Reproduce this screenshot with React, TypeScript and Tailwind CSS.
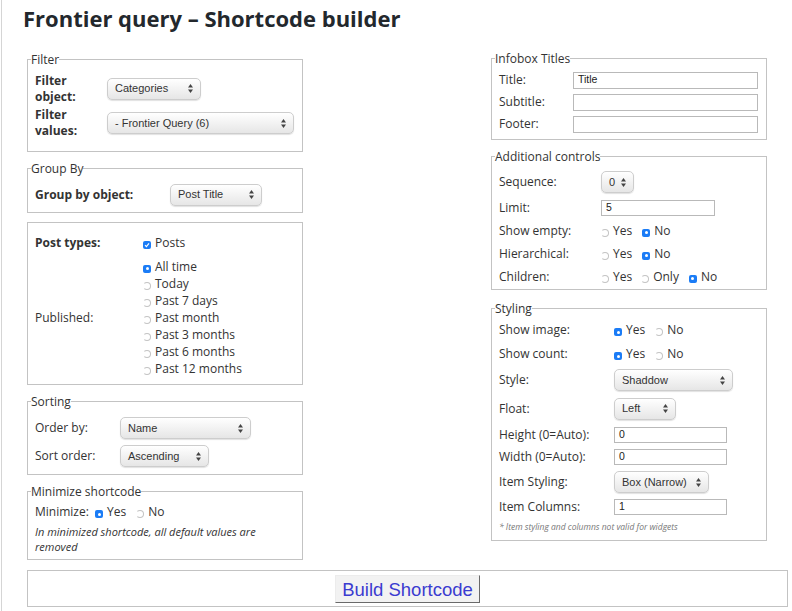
import React from "react";

function Arrows() {
  return (
    <svg width="5" height="9" viewBox="0 0 5 9" className="shrink-0">
      <path d="M2.5 0 L5 3.5 L0 3.5 Z" fill="#444" />
      <path d="M2.5 9 L5 5.5 L0 5.5 Z" fill="#444" />
    </svg>
  );
}

function Select({ value, w }: { value: string; w: string }) {
  return (
    <div
      className={`flex h-[22px] items-center justify-between rounded-[5px] border border-[#cdcdcd] bg-linear-to-b from-white to-[#e6e6e6] pl-[7px] pr-[7px] font-['Liberation_Sans',Arial,sans-serif] text-[11px] text-[#333] shadow-[0_1px_1px_rgba(0,0,0,0.12)] ${w}`}
    >
      <span>{value}</span>
      <Arrows />
    </div>
  );
}

function TextInput({ value, w, h }: { value: string; w: string; h: string }) {
  return (
    <div
      className={`flex items-center border border-[#b9b9b9] bg-white pl-[4px] font-['Liberation_Sans',Arial,sans-serif] text-[10.5px] text-[#222] ${w} ${h}`}
    >
      {value}
    </div>
  );
}

function Radio({ checked }: { checked?: boolean }) {
  if (checked) {
    return (
      <span className="ml-[3px] inline-flex h-[8px] w-[8px] translate-y-[2px] items-center justify-center rounded-[2px] bg-[#1b7cf6]">
        <span className="h-[3px] w-[3px] rounded-full bg-white" />
      </span>
    );
  }
  return (
    <span className="ml-[3px] inline-block h-[8px] w-[8px] translate-y-[2px] rounded-full border border-[#c4c4c4] border-l-transparent" />
  );
}

function Check() {
  return (
    <span className="ml-[3px] inline-flex h-[8px] w-[8px] translate-y-[2px] items-center justify-center rounded-[2px] bg-[#1b7cf6]">
      <svg width="6" height="6" viewBox="0 0 6 6">
        <path d="M1 3.2 L2.4 4.6 L5 1.4" stroke="white" strokeWidth="1.2" fill="none" />
      </svg>
    </span>
  );
}

function Opt({ checked, label, gap }: { checked?: boolean; label: string; gap?: string }) {
  return (
    <span className={`flex items-center ${gap ?? ""}`}>
      <Radio checked={checked} />
      <span className="ml-[4px]">{label}</span>
    </span>
  );
}

function Fieldset({
  legend,
  className,
  children,
}: {
  legend?: string;
  className?: string;
  children: React.ReactNode;
}) {
  return (
    <fieldset className={`border border-[#c3c3c3] px-[7px] ${className ?? ""}`}>
      {legend && <legend className="-ml-[4px] text-[12px] leading-[17px]">{legend}</legend>}
      {children}
    </fieldset>
  );
}

export default function App() {
  return (
    <div className="ml-px min-h-screen border-l border-[#d5d5d5] bg-white pl-[25px] font-['Open_Sans',sans-serif] text-[12px] text-[#333]">
      <h1 className="-ml-[4px] pt-[3px] text-[22px] leading-[30px] font-bold text-[#23282d]">
        Frontier query – Shortcode builder
      </h1>

      <div className="mt-[17px] flex items-start gap-[188px]">
        {/* left column */}
        <div className="w-[276px] pt-[1px]">
          <Fieldset legend="Filter" className="pt-[4px] pb-[10px]">
            <div className="flex h-[33px] items-center">
              <div className="w-[72px] leading-[16px] font-bold">
                Filter
                <br />
                object:
              </div>
              <Select value="Categories" w="w-[94px]" />
            </div>
            <div className="flex h-[36px] items-center">
              <div className="w-[72px] leading-[16px] font-bold">
                Filter
                <br />
                values:
              </div>
              <Select value="- Frontier Query (6)" w="w-[187px]" />
            </div>
          </Fieldset>

          <Fieldset legend="Group By" className="mt-[8px]">
            <div className="flex h-[35px] items-center">
              <div className="w-[135px] font-bold">Group by object:</div>
              <Select value="Post Title" w="w-[92px]" />
            </div>
          </Fieldset>

          <Fieldset className="mt-[9px] pt-[10px] pb-[7px]">
            <div className="flex h-[20px] items-center">
              <div className="w-[105px] font-bold">Post types:</div>
              <span className="flex items-center">
                <Check />
                <span className="ml-[4px]">Posts</span>
              </span>
            </div>
            <div className="mt-[5px] flex items-center">
              <div className="w-[105px]">Published:</div>
              <div className="flex flex-col leading-[17px]">
                <Opt checked label="All time" />
                <Opt label="Today" />
                <Opt label="Past 7 days" />
                <Opt label="Past month" />
                <Opt label="Past 3 months" />
                <Opt label="Past 6 months" />
                <Opt label="Past 12 months" />
              </div>
            </div>
          </Fieldset>

          <Fieldset legend="Sorting" className="mt-[8px] pt-[4px] pb-[4px]">
            <div className="flex h-[28px] items-center">
              <div className="w-[85px]">Order by:</div>
              <Select value="Name" w="w-[131px]" />
            </div>
            <div className="flex h-[28px] items-center">
              <div className="w-[85px]">Sort order:</div>
              <Select value="Ascending" w="w-[89px]" />
            </div>
          </Fieldset>

          <Fieldset legend="Minimize shortcode" className="mt-[8px] pb-[5px]">
            <div className="flex h-[24px] items-center">
              <div className="w-[57px]">Minimize:</div>
              <Opt checked label="Yes" />
              <Opt label="No" gap="ml-[7px]" />
            </div>
            <div className="text-[11px] leading-[15px] italic">
              In minimized shortcode, all default values are
              <br />
              removed
            </div>
          </Fieldset>
        </div>

        {/* right column */}
        <div className="w-[276px]">
          <Fieldset legend="Infobox Titles" className="pt-[2px] pb-[4px]">
            <div className="flex h-[22px] items-center">
              <div className="w-[74px]">Title:</div>
              <TextInput value="Title" w="w-[185px]" h="h-[17px]" />
            </div>
            <div className="flex h-[22px] items-center">
              <div className="w-[74px]">Subtitle:</div>
              <TextInput value="" w="w-[185px]" h="h-[17px]" />
            </div>
            <div className="flex h-[22px] items-center">
              <div className="w-[74px]">Footer:</div>
              <TextInput value="" w="w-[185px]" h="h-[17px]" />
            </div>
          </Fieldset>

          <Fieldset legend="Additional controls" className="mt-[8px] pt-[3px] pb-[1px]">
            <div className="flex h-[28px] items-center">
              <div className="w-[102px]">Sequence:</div>
              <Select value="0" w="w-[33px]" />
            </div>
            <div className="flex h-[23px] items-center">
              <div className="w-[102px]">Limit:</div>
              <TextInput value="5" w="w-[114px]" h="h-[16px]" />
            </div>
            <div className="flex h-[23px] items-center">
              <div className="w-[99px]">Show empty:</div>
              <Opt label="Yes" />
              <Opt checked label="No" gap="ml-[7px]" />
            </div>
            <div className="flex h-[23px] items-center">
              <div className="w-[99px]">Hierarchical:</div>
              <Opt label="Yes" />
              <Opt checked label="No" gap="ml-[7px]" />
            </div>
            <div className="flex h-[23px] items-center">
              <div className="w-[99px]">Children:</div>
              <Opt label="Yes" />
              <Opt label="Only" gap="ml-[6px]" />
              <Opt checked label="No" gap="ml-[7px]" />
            </div>
          </Fieldset>

          <Fieldset legend="Styling" className="mt-[10px] pt-[1px] pb-[4px]">
            <div className="flex h-[24px] items-center">
              <div className="w-[112px]">Show image:</div>
              <Opt checked label="Yes" />
              <Opt label="No" gap="ml-[7px]" />
            </div>
            <div className="flex h-[24px] items-center">
              <div className="w-[112px]">Show count:</div>
              <Opt checked label="Yes" />
              <Opt label="No" gap="ml-[7px]" />
            </div>
            <div className="flex h-[28px] items-center">
              <div className="w-[115px]">Style:</div>
              <Select value="Shaddow" w="w-[119px]" />
            </div>
            <div className="flex h-[29px] items-center">
              <div className="w-[115px]">Float:</div>
              <Select value="Left" w="w-[62px]" />
            </div>
            <div className="flex h-[23px] items-center">
              <div className="w-[115px]">Height (0=Auto):</div>
              <TextInput value="0" w="w-[113px]" h="h-[16px]" />
            </div>
            <div className="flex h-[22px] items-center">
              <div className="w-[115px]">Width (0=Auto):</div>
              <TextInput value="0" w="w-[113px]" h="h-[16px]" />
            </div>
            <div className="flex h-[28px] items-center">
              <div className="w-[115px]">Item Styling:</div>
              <Select value="Box (Narrow)" w="w-[95px]" />
            </div>
            <div className="flex h-[22px] items-center">
              <div className="w-[115px]">Item Columns:</div>
              <TextInput value="1" w="w-[113px]" h="h-[16px]" />
            </div>
            <div className="flex h-[18px] items-center text-[8.5px] text-[#777] italic">
              * Item styling and columns not valid for widgets
            </div>
          </Fieldset>
        </div>
      </div>

      <div className="mt-[10px] flex w-[761px] justify-center border border-[#c3c3c3] pt-[4px] pb-[3px]">
        <button className="h-[28px] border border-t-[#ececec] border-r-[#6a6a6a] border-b-[#6a6a6a] border-l-[#ececec] bg-[#f2f2f2] px-[6px] font-['Liberation_Sans',Arial,sans-serif] text-[18.5px] text-[#3b3bd0]">
          Build Shortcode
        </button>
      </div>
    </div>
  );
}
